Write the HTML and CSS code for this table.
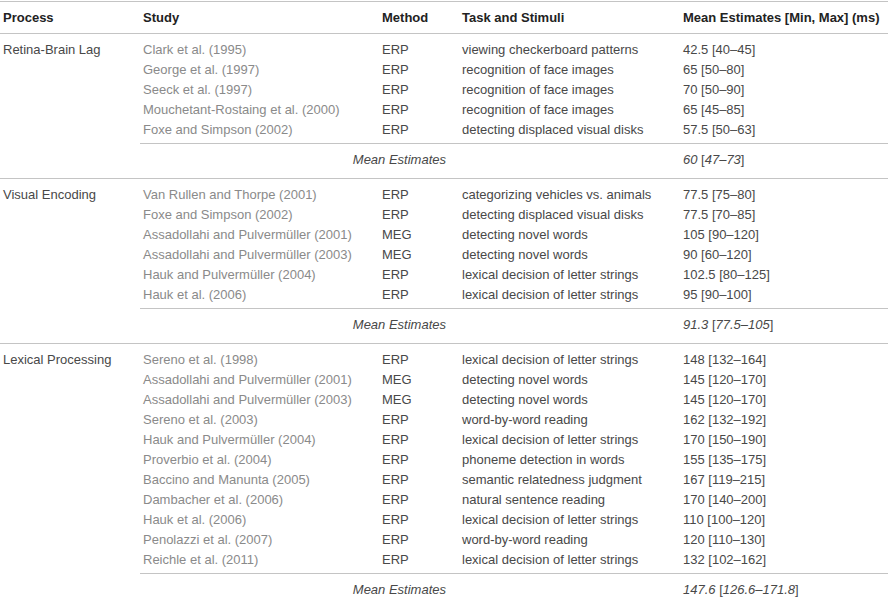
FILE: index.html
```html
<!DOCTYPE html>
<html>
<head>
<meta charset="utf-8">
<link rel="stylesheet" href="styles.css">
</head>
<body>
<div class="table">
  <div class="head">
    <div class="hc">Process</div>
    <div class="hc">Study</div>
    <div class="hc">Method</div>
    <div class="hc">Task and Stimuli</div>
    <div class="hc">Mean Estimates [Min, Max] (ms)</div>
  </div>

  <section class="group">
    <div class="process">Retina-Brain Lag</div>
    <div class="entries">
      <div class="entry"><span class="study">Clark et al. (1995)</span><span>ERP</span><span>viewing checkerboard patterns</span><span>42.5 [40–45]</span></div>
      <div class="entry"><span class="study">George et al. (1997)</span><span>ERP</span><span>recognition of face images</span><span>65 [50–80]</span></div>
      <div class="entry"><span class="study">Seeck et al. (1997)</span><span>ERP</span><span>recognition of face images</span><span>70 [50–90]</span></div>
      <div class="entry"><span class="study">Mouchetant-Rostaing et al. (2000)</span><span>ERP</span><span>recognition of face images</span><span>65 [45–85]</span></div>
      <div class="entry"><span class="study">Foxe and Simpson (2002)</span><span>ERP</span><span>detecting displaced visual disks</span><span>57.5 [50–63]</span></div>
    </div>
    <div class="summary"><span class="label">Mean Estimates</span><span class="val"><i>60</i> [<i>47–73</i>]</span></div>
  </section>

  <section class="group">
    <div class="process">Visual Encoding</div>
    <div class="entries">
      <div class="entry"><span class="study">Van Rullen and Thorpe (2001)</span><span>ERP</span><span>categorizing vehicles vs. animals</span><span>77.5 [75–80]</span></div>
      <div class="entry"><span class="study">Foxe and Simpson (2002)</span><span>ERP</span><span>detecting displaced visual disks</span><span>77.5 [70–85]</span></div>
      <div class="entry"><span class="study">Assadollahi and Pulvermüller (2001)</span><span>MEG</span><span>detecting novel words</span><span>105 [90–120]</span></div>
      <div class="entry"><span class="study">Assadollahi and Pulvermüller (2003)</span><span>MEG</span><span>detecting novel words</span><span>90 [60–120]</span></div>
      <div class="entry"><span class="study">Hauk and Pulvermüller (2004)</span><span>ERP</span><span>lexical decision of letter strings</span><span>102.5 [80–125]</span></div>
      <div class="entry"><span class="study">Hauk et al. (2006)</span><span>ERP</span><span>lexical decision of letter strings</span><span>95 [90–100]</span></div>
    </div>
    <div class="summary"><span class="label">Mean Estimates</span><span class="val"><i>91.3</i> [<i>77.5–105</i>]</span></div>
  </section>

  <section class="group last">
    <div class="process">Lexical Processing</div>
    <div class="entries">
      <div class="entry"><span class="study">Sereno et al. (1998)</span><span>ERP</span><span>lexical decision of letter strings</span><span>148 [132–164]</span></div>
      <div class="entry"><span class="study">Assadollahi and Pulvermüller (2001)</span><span>MEG</span><span>detecting novel words</span><span>145 [120–170]</span></div>
      <div class="entry"><span class="study">Assadollahi and Pulvermüller (2003)</span><span>MEG</span><span>detecting novel words</span><span>145 [120–170]</span></div>
      <div class="entry"><span class="study">Sereno et al. (2003)</span><span>ERP</span><span>word-by-word reading</span><span>162 [132–192]</span></div>
      <div class="entry"><span class="study">Hauk and Pulvermüller (2004)</span><span>ERP</span><span>lexical decision of letter strings</span><span>170 [150–190]</span></div>
      <div class="entry"><span class="study">Proverbio et al. (2004)</span><span>ERP</span><span>phoneme detection in words</span><span>155 [135–175]</span></div>
      <div class="entry"><span class="study">Baccino and Manunta (2005)</span><span>ERP</span><span>semantic relatedness judgment</span><span>167 [119–215]</span></div>
      <div class="entry"><span class="study">Dambacher et al. (2006)</span><span>ERP</span><span>natural sentence reading</span><span>170 [140–200]</span></div>
      <div class="entry"><span class="study">Hauk et al. (2006)</span><span>ERP</span><span>lexical decision of letter strings</span><span>110 [100–120]</span></div>
      <div class="entry"><span class="study">Penolazzi et al. (2007)</span><span>ERP</span><span>word-by-word reading</span><span>120 [110–130]</span></div>
      <div class="entry"><span class="study">Reichle et al. (2011)</span><span>ERP</span><span>lexical decision of letter strings</span><span>132 [102–162]</span></div>
    </div>
    <div class="summary"><span class="label">Mean Estimates</span><span class="val"><i>147.6</i> [<i>126.6–171.8</i>]</span></div>
  </section>
</div>
</body>
</html>
```
FILE: styles.css
```css
html, body {
  margin: 0;
  padding: 0;
  background: #ffffff;
}
body {
  font-family: "Liberation Sans", Arial, sans-serif;
  font-size: 13px;
  color: #484848;
}
.table {
  width: 888px;
  padding-top: 1px;
}
.head {
  display: grid;
  grid-template-columns: 140px 239px 80px 221px 1fr;
  height: 31px;
  align-items: center;
  border-top: 1px solid #c4c4c4;
  border-bottom: 1px solid #c4c4c4;
  font-weight: bold;
  color: #222222;
}
.hc {
  padding-left: 3px;
  white-space: nowrap;
}
.group {
  display: grid;
  grid-template-columns: 140px 1fr;
  padding-top: 6px;
  border-bottom: 1px solid #c4c4c4;
}
.group.last {
  border-bottom: none;
}
.process {
  grid-column: 1;
  grid-row: 1;
  padding-left: 3px;
  line-height: 20px;
  white-space: nowrap;
}
.entries {
  grid-column: 2;
  grid-row: 1;
  padding-bottom: 3px;
}
.entry {
  display: grid;
  grid-template-columns: 239px 80px 221px 1fr;
  line-height: 20px;
  height: 20px;
  white-space: nowrap;
}
.entry span {
  padding-left: 3px;
}
.entry .study {
  color: #8a8a8a;
}
.summary {
  grid-column: 2;
  grid-row: 2;
  display: grid;
  grid-template-columns: 319px 221px 1fr;
  border-top: 1px solid #c4c4c4;
  height: 35px;
  padding-top: 6px;
  box-sizing: border-box;
  line-height: 20px;
}
.summary .label {
  grid-column: 1;
  text-align: right;
  padding-right: 13px;
  font-style: italic;
}
.summary .val {
  grid-column: 3;
  padding-left: 3px;
  white-space: nowrap;
}
.summary i {
  font-style: italic;
}
```
